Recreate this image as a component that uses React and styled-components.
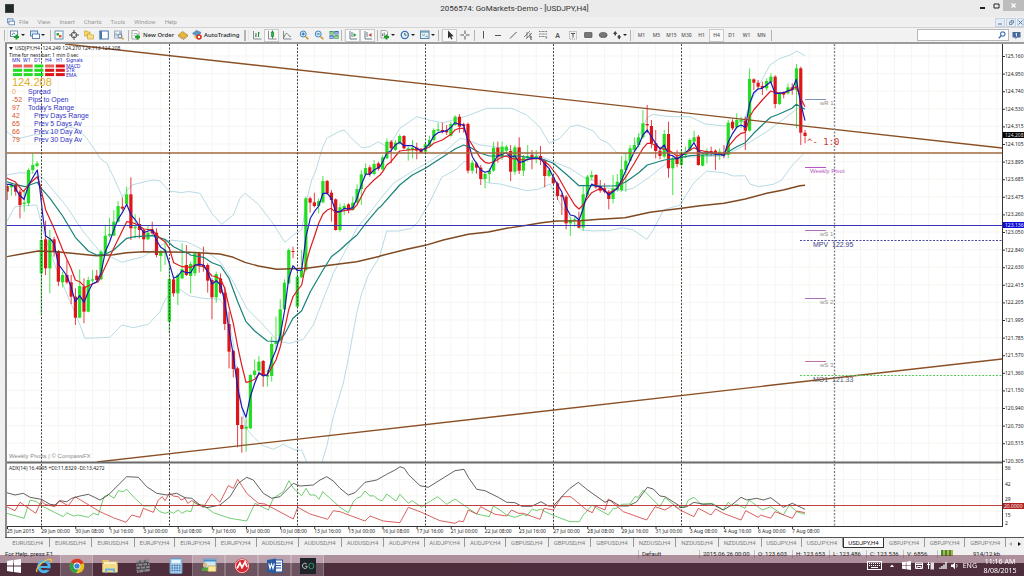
import React from "react";
import styled, { createGlobalStyle } from "styled-components";

const GREEN = "#22dd22";
const RED = "#dd1418";
const SANS = '"Noto Sans", "Open Sans", sans-serif';
const ARIAL = '"Liberation Sans", Arial, sans-serif';
const UI = 'Roboto, "Noto Sans", sans-serif';

/* ---------- chart data ---------- */

const STEP = 128 / 30;
const barX = (i) => 41.3 + i * STEP;

// colour, high, body top, body bottom, low (thirds of a pixel below "top")
const BARS = [
  {
    first: -8,
    top: 150,
    rows: `r 105 108 125 150;g 98 103 112 137;r 100 105 125 137;r 118 125 165 205;g 120 158 162 185;g 55 60 160 168;g 10 45 60 70;g 33 40 48 52;
      g 220 270 370 495;r 212 268 355 375;g 240 268 355 430;r 260 268 305 320;r 300 303 395 408;g 365 375 397 412;r 330 375 397 402;r 375 397 440 462;
      r 415 440 503 525;g 358 408 503 505;r 385 410 485 520;g 380 390 485 487;g 360 388 392 398;r 360 377 390 397;g 300 305 388 390;g 228 257 310 312;
      g 203 252 257 262;g 180 215 257 258;g 153 168 215 217;r 142 170 176 182;g 110 133 162 168;r 82 133 235 270;g 193 230 235 265;r 203 222 240 265;
      r 235 240 268 305;g 225 248 268 270;r 215 238 250 254;r 235 248 315 322;g 300 305 318 365;g 270 300 304 345;g 340 387 515 550;r 380 388 430 440;
      g 370 375 430 465;g 280 358 385 388;r 285 345 375 378;g 335 342 378 430`,
  },
  {
    first: 36,
    top: 170,
    rows: `g 245 250 310 318;r 245 250 285 308;r 230 285 290 305;r 280 285 332 368;r 325 330 382 448;g 305 312 382 398;r 310 325 368 372;r 350 368 462 480;
      r 425 462 545 595;r 540 543 597 622;r 590 595 765 832;r 740 765 777 848;g 745 770 776 845;g 612 615 775 777;g 568 602 615 625;g 558 575 602 610;
      r 570 573 618 650;g 600 615 620 650;g 500 522 618 635;g 440 515 522 540;g 388 418 512 515;g 328 338 418 420;g 235 240 340 342;r 230 243 246 265;
      g 295 320 410 412;g 240 300 322 325;g 80 85 300 305;r 80 85 98 128;r 68 97 108 112;g 85 93 108 130;g 18 33 97 100;r 30 33 70 74;
      r 60 68 90 155;r 85 88 180 182;g 100 112 180 185;g 100 108 115 135;r 100 103 120 130;g 80 98 120 122;g 43 57 98 100;g 0 13 57 105;
      g -20 -6 13 18;r -14 -8 12 20;g -30 -18 12 16;r -25 -20 -4 2`,
  },
  {
    first: 80,
    top: 100,
    rows: `g 165 172 208 212;g 115 125 175 178;r 120 125 145 190;g 120 128 150 153;g 103 108 130 133;r 105 108 145 148;g 140 145 150 182;g 120 143 150 175;
      r 128 143 152 178;r 144 148 158 160;g 125 133 155 158;g 107 120 138 142;g 85 90 120 124;g 68 88 92 95;r 68 90 96 100;r 75 92 97 105;
      g 65 72 107 110;g 46 50 75 78;r 42 50 80 98;r 68 73 78 98;r 68 72 212 220;g 180 188 212 222;r 185 190 203 220;r 195 203 237 255;
      g 218 222 237 265;g 205 212 222 248;g 125 143 212 215;r 125 143 172 188;g 125 140 170 180;g 135 140 152 158;r 135 153 215 243;g 135 142 215 225;
      r 112 142 212 222;g 165 172 212 228;g 135 168 175 185;r 150 165 175 208;g 150 168 175 190;r 138 168 180 195;r 178 182 228 262;g 205 210 228 232;
      r 225 232 250 252;r 245 250 288 300;r 280 285 290 345;r 285 290 370 388;g 350 360 370 408;g 350 358 362 380;r 335 360 383 385;g 255 283 383 392;
      g 225 230 285 290;g 212 225 232 240;r 222 225 262 266;r 240 258 272 278`,
  },
  {
    first: 132,
    top: 80,
    rows: `r 310 325 335 340;r 330 335 357 388;g 285 325 357 370;g 282 305 330 335;g 228 268 330 335;g 220 242 270 335;g 195 205 242 245;g 172 195 210 214;
      g 160 172 195 202;g 90 130 172 176;r 75 132 136 160;r 120 138 190 205;r 150 190 213 235;r 200 212 228 238;g 150 162 230 235;r 125 162 265 293;
      g 228 235 265 345;r 210 230 252 262;g 210 220 255 258;g 200 215 225 235;g 175 180 212 215;g 152 172 185 190;r 165 170 255 257;g 220 225 257 259;
      g 205 213 225 250;r 200 213 220 228;r 208 212 222 270;g 205 215 222 240;r 195 218 222 235;g 120 128 225 235;r 118 125 145 150;g 100 120 142 145`,
  },
  {
    first: 164,
    top: 0,
    rows: `g 350 360 365 385;r 350 362 392 450;g 205 237 392 395;r 235 238 248 270;r 240 248 260 268;r 245 258 264 285;g 235 243 265 272;g 220 230 247 250;
      r 226 230 312 325;g 276 280 312 315;r 274 278 284 295;g 250 262 280 284;r 250 262 270 284;g 192 205 270 385;r 200 205 398 435;r 390 398 408 430`,
  },
];

const candles = BARS.flatMap(({ first, top, rows }) =>
  rows.split(";").map((row, n) => {
    const [c, ...v] = row.trim().split(/\s+/);
    const [high, open, close, low] = v.map((n) => top + Number(n) / 3);
    return { x: barX(first + n), up: c === "g", high, open, close, low };
  })
);

// every chunk is "x,y x,y ..." in thirds of a pixel from its own origin
const trace = (chunks) =>
  chunks
    .map(([ox, oy, pts]) =>
      pts
        .split(" ")
        .map((p) => {
          const [x, y] = p.split(",").map(Number);
          return `${(ox + x / 3).toFixed(1)},${(oy + y / 3).toFixed(1)}`;
        })
        .join(" ")
    )
    .join(" ");

const fastMa = trace([
  [0, 150, "20,103 30,103 42,108 58,135 72,148 86,105 100,80 112,60 120,120 130,210 137,258 150,266 162,280 175,342 188,360 201,378 213,410 226,455 239,437 252,457 265,425 277,402 290,395 303,370 316,305 329,275 341,240 354,208 367,188 380,163 393,195 405,208 418,228 431,248 444,243 457,240 469,270 482,292 495,300 508,340 521,385 534,378 546,362 559,368 572,368"],
  [190, 170, "15,285 28,283 41,285 53,305 66,342 79,332 92,345 104,395 117,480 130,555 143,655 155,710 168,742 181,680 194,640 207,608 220,618 232,615 245,570 258,540 271,495 284,420 296,325 309,287 322,302 335,300 348,200 361,145 373,125 386,108 399,70 412,70 424,85 437,125 450,125 463,115 475,117 488,113 501,85 514,45 527,12 539,13 552,0"],
  [380, 100, "0,200 8,185 20,160 33,152 46,135 59,127 72,137 84,137 97,137 110,145 123,152 136,145 149,130 161,108 174,98 187,95 200,92 213,82 225,68 238,73 251,75 264,125 277,170 289,190 302,210 315,217 328,213 341,185 353,168 366,163 379,158 392,172 405,168 417,187 430,185 443,178 456,175 469,175 481,175 494,192 507,205 520,232 533,255 545,275 558,322 571,345 584,348 597,360 609,328 622,280 635,252 648,258"],
  [600, 80, "1,320 14,332 26,345 39,335 52,325 65,300 78,270 90,242 103,215 116,195 129,165 142,150 154,170 167,190 180,207 193,195 206,225 218,227 231,237 244,228 257,218 270,205 282,188 295,213 308,220 321,218 334,218 346,223 359,222 372,227 385,185 398,160 410,142 423,135"],
  [680, 0, "196,382 209,310 221,278 234,267 247,265 260,255 272,245 285,280 298,280 311,278 324,272 336,270 349,238 362,310 375,362"],
]);

const slowMa = trace([
  [0, 150, "20,84 45,95 70,125 90,100 112,80 120,105 137,180 162,235 188,300 213,355 226,390 239,395 256,412 275,403 295,395 316,350 341,295 380,215 393,217 410,223 431,237 457,240 469,253 482,266 495,275 508,295 521,338 546,350 572,352"],
  [190, 170, "15,285 41,290 66,318 79,320 92,328 104,355 117,410 130,460 143,530 155,585 168,637 181,634 194,628 207,612 220,613 232,615 258,570 271,530 284,475 296,420 309,380 322,362 335,345 348,280 361,235 373,200 386,160 399,132 412,120 424,115 437,128 463,122 488,118 501,105 514,80 527,55 552,30"],
  [380, 100, "0,225 8,215 20,195 33,185 59,153 84,150 123,148 136,147 149,140 161,130 187,120 213,103 225,90 238,85 251,85 264,115 277,135 289,155 302,175 315,187 328,190 341,185 366,172 379,168 392,175 430,180 456,177 481,175 507,195 533,228 558,272 584,315 597,327 609,315 622,295 635,278"],
  [600, 80, "1,325 26,340 52,325 78,290 103,250 129,205 142,190 154,190 180,205 206,210 231,228 257,218 282,203 295,210 334,218 372,223 385,200 410,170 423,160"],
  [680, 0, "196,397 209,350 221,330 247,300 272,273 285,278 311,280 336,268 349,260 362,295 375,320"],
]);

const tealMa = trace([
  [0, 150, "20,95 45,103 75,110 112,97 124,115 150,145 188,198 226,262 265,303 290,315 316,313 341,300 380,265 405,260 457,257 495,268 521,290 546,303 570,313"],
  [190, 170, "0,255 41,262 66,278 92,288 117,325 143,395 168,455 194,483 232,513 265,515 284,492 309,445 335,422 361,365 399,300 424,260 450,240 475,217 501,195 527,160 565,115"],
  [380, 100, "0,322 59,255 97,225 136,205 187,172 225,147 251,135 270,142 302,160 328,168 366,168 417,168 443,172 481,175 520,190 558,222 597,257 648,257"],
  [600, 80, "1,318 39,318 52,317 78,305 116,278 142,255 193,240 231,235 270,227 308,225 372,225 385,215 410,200 423,194"],
  [680, 0, "196,428 221,400 260,362 272,352 298,342 336,325 349,313 375,328"],
]);

const longMa = trace([
  [0, 150, "20,320 60,313 115,303 170,305 215,310 290,317 340,314 380,308 430,305 508,306 568,307"],
  [190, 170, "0,247 90,252 130,262 165,277 205,288 260,298 350,295 400,288 500,275 570,259"],
  [380, 100, "0,468 80,448 136,436 190,420 265,403 325,396 380,385 440,376 485,368 530,363 600,362 658,358"],
  [600, 80, "0,418 75,413 150,397 245,385 300,377 372,370 436,357 500,340 550,330 600,317 615,316"],
]);

const bandTop = trace([
  [0, 0, "20,395 45,413 60,415 100,405 160,398 205,380 235,388 260,415"],
  [0, 150, "285,0 300,25 320,40 340,80 367,140 395,105 435,95 460,90 480,93 508,123 545,128 560,125"],
  [190, 170, "0,65 30,70 65,130 95,163 130,135 150,85 165,70 205,103 245,155 285,217 310,195 335,180 350,90 365,30 378,0"],
  [0, 0, "965,450 980,415"],
  [340, 0, "0,393 12,390 40,420 65,443 90,440 115,425 135,437 155,425 180,385 230,350 275,362 310,368 375,350 440,325 515,325 560,345 600,382 628,430 660,415 690,380 715,375 760,393"],
  [600, 80, "0,178 25,190 50,218 75,222 95,215 125,150 142,112 160,103 190,108 220,110"],
  [680, 0, "30,350 75,372 135,378 190,365 215,300 240,250 270,195 300,175 330,165 350,153 375,167"],
]);

const bandMid = trace([
  [0, 150, "20,75 60,68 100,70 130,85 200,170 250,245 300,305 365,337 430,320 470,295 508,270 560,275"],
  [190, 170, "0,220 50,245 90,275 130,335 170,415 220,465 265,515 300,520 340,508 370,465 430,310 470,235 500,175 550,115"],
  [380, 100, "0,298 40,250 100,212 140,190 200,150 240,115 255,118 300,135 345,140 480,168 520,185 570,205 620,238 650,244"],
  [600, 80, "0,318 60,333 100,325 150,290 200,250 240,232 372,228 436,195 500,155 560,110 600,80"],
]);

const bandLow = trace([
  [0, 150, "20,215 45,170 75,167 110,165 130,245 170,360 200,430 240,525 255,565 330,562 365,525 400,533 445,523 480,485 495,450 515,425 540,418 560,432"],
  [190, 170, "0,378 40,385 90,388 110,420 130,520 145,640 165,770 190,800 215,825 250,838 280,823 315,840 335,840 352,880 395,880 410,830 430,740 460,640 480,540 500,430 515,370 535,315 560,275"],
  [380, 100, "0,465 20,393 55,393 95,385 115,365 150,305 185,232 225,210 255,183 285,215 320,248 360,252 440,272 475,268 510,252 545,320 575,360 605,390 640,393"],
  [600, 80, "0,452 25,452 70,443 100,450 140,478 160,450 190,390 240,375 280,310 320,273 370,278 400,288 435,287 450,312 475,320 520,313 545,300 575,258 612,220"],
]);

const adxLine = trace([
  [0, 445, "20,143 45,150 70,145 90,157 124,163 150,178 165,180 180,167 200,170 215,160 240,153 265,148 300,165 325,150 355,120 380,95 415,97 440,125 470,145 500,150 530,145 555,158 575,160 600,180 620,188 660,180 690,155 715,115 740,97 760,105 790,145 815,160 840,155 880,115 900,123 940,120 960,105 980,95 1000,108"],
  [340, 445, "0,130 25,150 45,143 75,112 110,105 140,88 165,75 180,65 193,70 205,88 240,122 265,127 300,105 345,77 372,73 385,97 410,133 435,137 475,157 500,172 525,173 545,184 575,184 603,170 625,183 640,183 670,150 690,130 715,112 740,133 795,172 810,165 840,183 865,183 890,170 922,127 940,132 960,153 975,155 1018,182"],
  [680, 445, "0,188 20,185 42,172 70,178 95,177 130,195 155,180 183,157 200,165 230,160 250,165 272,158 310,187 337,175 375,193"],
]);

const plusDi = trace([
  [0, 445, "20,205 45,212 72,220 90,165 110,170 130,185 190,215 200,203 220,213 235,210 265,217 280,205 295,210 312,155 325,148 342,160 355,137 370,140 380,133 400,155 430,183 460,182 480,200 495,205 510,200 520,205 535,195 545,205 560,197 573,200 583,170 590,178 610,180 640,203 690,220 740,228 765,175 805,195 820,160 850,140 867,107 880,130 905,152 918,130 930,150 945,150 957,163 968,140"],
  [340, 445, "0,187 25,203 40,170 50,160 62,155 75,138 90,153 100,152 118,165 127,167 140,147 168,168 180,148 205,175 217,167 245,187 257,177 293,155 320,178 345,162 385,190 410,207 448,215 460,183 480,195 500,210 525,217 550,208 560,213 577,192 590,197 603,192 615,200 645,213 690,230 718,230 730,210 757,180 770,190 805,210 820,190 830,190 845,178 870,177 885,155 895,157 910,135 960,185 975,158 1015,190"],
  [680, 445, "0,185 15,187 25,165 42,157 62,177 97,175 130,195 145,172 155,183 170,178 195,190 207,165 247,195 272,185 310,210 328,180 350,200 375,208"],
]);

const minusDi = trace([
  [0, 445, "20,185 45,197 60,172 107,205 124,168 135,178 165,185 177,167 205,182 225,155 300,200 340,218 378,232 395,210 420,217 430,190 460,202 475,165 487,155 495,167 508,145 520,153 535,155 543,165 555,160 563,175 575,167 610,187 635,147 660,172 685,122 700,130 713,103 740,145 775,175 795,177 880,222 893,187 930,207 983,223 1000,197"],
  [340, 445, "0,200 75,228 90,213 130,228 180,233 205,187 240,200 300,227 345,235 357,228 370,230 385,195 410,207 422,185 465,208 500,213 515,195 535,205 550,205 600,223 612,190 640,195 665,155 692,155 740,195 757,203 767,183 795,195 805,162 850,200 920,225 945,185 975,195 1000,180"],
  [680, 445, "0,195 42,215 55,190 93,210 107,192 130,205 183,225 197,197 235,217 242,210 272,220 285,200 337,220 350,198 375,203"],
]);

const prices = [
  "125.160", "124.950", "124.740", "124.530", "124.315", "124.105", "123.895", "123.685",
  "123.475", "123.260", "123.050", "122.840", "122.630", "122.415", "122.205", "121.995",
  "121.785", "121.570", "121.360", "121.150", "120.940", "120.730", "120.515", "120.305",
];
const priceY = (n) => 56 + n * 17.6;

const dates = [
  "25 Jun 2015", "29 Jun 00:00", "30 Jun 08:00", "1 Jul 16:00", "3 Jul 00:00", "6 Jul 08:00",
  "7 Jul 16:00", "9 Jul 00:00", "10 Jul 08:00", "13 Jul 16:00", "15 Jul 00:00", "16 Jul 08:00",
  "17 Jul 16:00", "21 Jul 00:00", "22 Jul 08:00", "23 Jul 16:00", "27 Jul 00:00", "28 Jul 08:00",
  "29 Jul 16:00", "31 Jul 00:00", "3 Aug 08:00", "4 Aug 16:00", "6 Aug 00:00", "7 Aug 08:00",
];

const stats = [
  ["0", "Spread", 28],
  ["-52", "Pips to Open", 28],
  ["97", "Today's Range", 28],
  ["42", "Prev Days Range", 34],
  ["65", "Prev 5 Days Av", 34],
  ["66", "Prev 10 Day Av", 34],
  ["79", "Prev 30 Day Av", 34],
];

const SALMON = "#e8645c";
const signals = [
  ["MACD", [SALMON, SALMON, GREEN, SALMON, RED]],
  ["STR", [GREEN, GREEN, GREEN, RED, RED]],
  ["EMA", [GREEN, GREEN, GREEN, RED, RED]],
];

const pivots = [
  ["wR 1", 99, "#8090b8", 820, "#909090"],
  ["Weekly Pivot", 167, "#b455c4", 810, "#b455c4"],
  ["wS 1", 230, "#b070b8", 820, "#909090"],
  ["wS 2", 298, "#b070b8", 820, "#909090"],
  ["wS 3", 361, "#c070a8", 820, "#909090"],
];

const Plot = () => (
  <PlotSvg role="img" aria-label="USDJPY H4 chart">
    <defs>
      <clipPath id="main">
        <rect x="7" y="44" width="3000" height="418" />
      </clipPath>
    </defs>
    <g transform="translate(-7 -44)">
      <g stroke="#f5f5f1" strokeWidth="1">
        {Array.from({ length: 58 }, (_, k) => 24.2 + k * STEP * 4).map((x) => (
          <line key={x} x1={x} x2={x} y1="44" y2="526" />
        ))}
        {[...prices.map((_, n) => priceY(n)), 479.5, 496, 511].map((y) => (
          <line key={y} x1="7" x2="3000" y1={y} y2={y} />
        ))}
      </g>

      <g fill="none" stroke="#b9dbe6" clipPath="url(#main)">
        <polyline points={bandTop} />
        <polyline points={bandMid} />
        <polyline points={bandLow} />
      </g>

      <g clipPath="url(#main)">
        {candles.map((c) => (
          <g key={c.x} fill={c.up ? GREEN : RED}>
            <rect x={c.x - 0.5} y={c.high} width="1" height={c.low - c.high} opacity="0.8" />
            <rect x={c.x - 1.6} y={c.open} width="3.2" height={c.close - c.open} />
          </g>
        ))}
      </g>

      <g fill="none" strokeWidth="1.2" strokeLinejoin="round">
        <polyline points={longMa} stroke="#7f4a22" strokeWidth="1.4" />
        <polyline points={tealMa} stroke="#17827a" />
        <polyline points={slowMa} stroke="#dc1c20" />
        <polyline points={fastMa} stroke="#1a1ab8" />
      </g>

      <g stroke="#8b5026" strokeWidth="1.4" clipPath="url(#main)">
        <line x1="65" y1="44" x2="1002" y2="148" />
        <line x1="97" y1="462" x2="1002" y2="359" />
        <line x1="7" y1="153" x2="3000" y2="153" stroke="#a0683c" strokeWidth="1.6" />
      </g>
      <rect x="7" y="225" width="3000" height="1" fill="#3838b4" />

      {/* period separators */}
      <g stroke="#444" strokeDasharray="2 1.5">
        {[41.5, 169.5, 297.5, 425.5, 553.5, 681.5].map((x) => (
          <line key={x} x1={x} x2={x} y1="44" y2="526" />
        ))}
        <line x1="834.5" x2="834.5" y1="44" y2="526" stroke="#888" strokeWidth="1.4" />
      </g>

      <line x1="800" x2="3000" y1="240.5" y2="240.5" stroke="#4848a0" strokeDasharray="2 1.5" />
      <line x1="800" x2="3000" y1="375.5" y2="375.5" stroke="#58c858" strokeDasharray="2 1.5" />
      {pivots.map(([name, y, line, x, color]) => (
        <g key={name}>
          <line x1="805" x2="826" y1={y + 0.5} y2={y + 0.5} stroke={line} />
          <Note x={x} y={y + 6} $color={color}>{name}</Note>
        </g>
      ))}
      <Note x="813" y="247" $size={7} $color="#3c3c84">MPV</Note>
      <Note x="832" y="247" $size={7} $color="#3c3c84">122.95</Note>
      <Note x="813" y="382" $size={7} $color="#54546c">MO1</Note>
      <Note x="832" y="382" $size={7} $color="#54546c">121.33</Note>
      <MonoNote x="807" y="145">^- 1:0</MonoNote>

      {/* info panel */}
      <path d="M9 47h4l-2 3z" fill="#111" />
      <Tiny x="15" y="50">USDJPY,H4&#160; 124.249 124.270 124.113 124.208</Tiny>
      <Tiny x="9" y="57">Time for next bar: 1 min 0 sec</Tiny>
      {["MN", "W1", "D1", "H4", "H1"].map((t, n) => (
        <Tiny key={t} x={12 + n * 11} y="62" $color="#2424c4">{t}</Tiny>
      ))}
      <Tiny x="66" y="62" $color="#2424c4">Signals</Tiny>
      {signals.map(([name, colors], row) => (
        <g key={name}>
          {colors.map((c, n) => (
            <rect key={n} x={13 + n * 10.7} y={64.5 + row * 4.3} width="9" height="3" fill={c} />
          ))}
          <Tiny x="66" y={68 + row * 4.3} $color="#2424c4">{name}</Tiny>
        </g>
      ))}
      <Note x="12" y="86" $size={11} $color="#dcae28">124.208</Note>
      {stats.map(([value, label, x], n) => (
        <g key={label}>
          <Note x="12" y={93.5 + n * 8} $size={7} $color={n ? "#e0501c" : "#eca850"}>{value}</Note>
          <Note x={x} y={93.5 + n * 8} $size={7} $color="#3434c4">{label}</Note>
        </g>
      ))}
      <Note x="9" y="458" $color="#8a8a8a">Weekly Pivots | © CompassFX</Note>

      {/* indicator window */}
      <rect x="7" y="461.5" width="3000" height="2" fill="#6a6a6a" />
      <g fill="none" strokeWidth="0.8">
        <polyline points={plusDi} stroke="#4fc050" />
        <polyline points={minusDi} stroke="#d03838" />
        <polyline points={adxLine} stroke="#3a3a3a" />
      </g>
      <rect x="7" y="505" width="3000" height="1" fill="#c04040" />
      <Tiny x="9" y="470">ADX(14) 16.4995 +DI:11.8329 -DI:13.4272</Tiny>

      <rect x="7" y="526" width="3000" height="1" fill="#333" />
      {dates.map((d, n) => (
        <g key={d}>
          <rect x={7 + n * STEP * 8} y="526" width="1" height="3" fill="#333" />
          <Tiny x={7 + n * STEP * 8} y="533">{d}</Tiny>
        </g>
      ))}
    </g>
  </PlotSvg>
);

const Scale = () => (
  <ScaleSvg role="img" aria-label="Price scale">
    <g transform="translate(-1002 -44)">
      <rect x="1002" y="44" width="1" height="483" fill="#333" />
      {prices.map((p, n) => (
        <g key={p}>
          <rect x="1003" y={priceY(n)} width="2" height="1" fill="#333" />
          <Tiny x="1005" y={priceY(n) + 2}>{p}</Tiny>
        </g>
      ))}
      <rect x="1003" y="132" width="21" height="6" fill="#000" />
      <Tiny x="1005" y="137" $color="#ddd">124.208</Tiny>
      <rect x="1003" y="222" width="21" height="6" fill="#0c0cd8" />
      <Tiny x="1005" y="227" $color="#eee">123.136</Tiny>
      {[["56", 470], ["42", 486], ["29", 501], ["15", 517], ["2", 525]].map(([t, y]) => (
        <Tiny key={t} x="1005" y={y}>{t}</Tiny>
      ))}
      <rect x="1003" y="503" width="21" height="6" fill="#b42020" />
      <Tiny x="1004" y="508" $color="#eee">20.0000</Tiny>
    </g>
  </ScaleSvg>
);

/* ---------- toolbar icons, 10 x 10 ---------- */

const plus = <path d="M6.500 4.500v5M4 7h5" stroke="#18a028" strokeWidth="2" />;

const glyphs = {
  newChart: <><rect x="0.5" y="1" width="7" height="5.5" fill="#fff" stroke="#6a8aa8" /><path d="M2 5l1.500-2L5 4" stroke="#48a" />{plus}</>,
  profiles: <><rect x="0.5" y="1" width="7" height="5" fill="#d8e8f8" stroke="#5a86b4" /><rect x="2.5" y="4" width="7" height="4.5" fill="#fff" stroke="#5a86b4" /></>,
  market: <><rect x="1" y="1" width="8" height="8" fill="#fff" stroke="#6a96b8" /><path d="M2.500 3h2.500v2.500H2.500z" fill="#28a838" /><path d="M5 5h2.500v2.500H5z" fill="#d86030" /></>,
  target: <><circle cx="5" cy="5" r="2.800" stroke="#555" /><path d="M5 0v4M5 6v4M0 5h4M6 5h4" stroke="#555" /></>,
  folders: <><path d="M0 1h3l1 1h2v4H0z" fill="#f4d668" stroke="#c09428" strokeWidth="0.6" /><path d="M3.500 4h3l1 1h2.200v4H3.500z" fill="#f8e080" stroke="#c09428" strokeWidth="0.6" /></>,
  terminal: <><rect x="0.8" y="1" width="8.500" height="8" fill="#fff" stroke="#4878b0" /><rect x="1" y="1" width="2" height="8" fill="#4878b0" /></>,
  tester: <><rect x="0.5" y="1" width="7" height="7" fill="#e8f0f8" stroke="#9ab" /><path d="M2 6V3M4 6V4M6 5V2" stroke="#7898b8" /><circle cx="6" cy="6" r="2" stroke="#789" /><path d="M7.500 7.500l2 2" stroke="#c89838" strokeWidth="1.4" /></>,
  order: <><path d="M1 0.500h5l2 2V9H1z" fill="#fff" stroke="#888" strokeWidth="0.7" /><path d="M2.500 3.500h4M2.500 5.500h2" stroke="#889" strokeWidth="0.7" />{plus}</>,
  book: <><path d="M0.500 5L4.500 1.500 9.500 5 5.500 8.500z" fill="#e8b838" stroke="#b07c18" strokeWidth="0.7" /><path d="M0.500 5v1.500l5 3 4-3V5" stroke="#b07c18" strokeWidth="0.7" /></>,
  auto: <><path d="M0.500 3.500l4-3 4.500 2-3 4z" fill="#5a98cc" stroke="#3870a0" strokeWidth="0.6" /><path d="M1 5l3 4 2-2z" fill="#e4b840" /><circle cx="7" cy="7" r="2.800" fill="#d83828" /><path d="M6 6h2v2H6z" fill="#fff" /></>,
  bars: <><path d="M1.500 1v8h8" stroke="#889" /><path d="M4 3v4M3 6h1M6.500 2v5M6.500 3h1.200" stroke="#2a8a38" /></>,
  candles: <><path d="M1.500 1v8h8" stroke="#889" /><path d="M5.500 0.500v8" stroke="#2a8a38" /><rect x="4.2" y="2" width="2.600" height="4.500" fill="#38b048" stroke="#2a8a38" strokeWidth="0.6" /></>,
  line: <><path d="M1.500 1v8h8" stroke="#889" /><path d="M2 7.500Q4 1 6 4.500T9 6" stroke="#6a8a78" /></>,
  zoomIn: <><circle cx="4.2" cy="4" r="3" fill="#d4eaf8" stroke="#4888b8" /><path d="M2.700 4h3M4.200 2.500v3" stroke="#2868a0" /><path d="M6.500 6.500l2.800 2.800" stroke="#c8982c" strokeWidth="1.6" /></>,
  zoomOut: <><circle cx="4.2" cy="4" r="3" fill="#d4eaf8" stroke="#4888b8" /><path d="M2.700 4h3" stroke="#2868a0" /><path d="M6.500 6.500l2.800 2.800" stroke="#c8982c" strokeWidth="1.6" /></>,
  tile: <><path d="M0.500 1h4.200v3.600H0.500zM5.400 5.200h4.200v3.600H5.400z" fill="#38a040" /><path d="M5.400 1h4.200v3.600H5.400zM0.500 5.200h4.200v3.600H0.500z" fill="#3468b8" /><path d="M1.300 3h2.600M6.200 3h2.600M1.300 7.200h2.600M6.200 7.200h2.600" stroke="#fff" /></>,
  scroll: <><path d="M2 1v8h7M4 2v5" stroke="#6a7a8a" /><path d="M5.500 3l3 2-3 2z" fill="#2a9a3a" /></>,
  shift: <><path d="M2 1v8h7M4 2v5" stroke="#6a7a8a" /><path d="M8.500 3l-3 2 3 2z" fill="#c04040" /></>,
  indicators: <><path d="M1 0.500h5l1.500 1.500V8H1z" fill="#fff" stroke="#888" strokeWidth="0.7" /><path d="M2.500 6V3.500M4.200 6V2.500" stroke="#777" />{plus}</>,
  clock: <><circle cx="4.8" cy="5" r="4.2" fill="#2f72b8" /><circle cx="4.8" cy="5" r="2.9" fill="#e8f4fc" /><path d="M4.800 3v2.200h1.700" stroke="#234" strokeWidth="0.8" /></>,
  template: <><rect x="0.5" y="1" width="8.500" height="7.500" fill="#e4f0f8" stroke="#5888a8" /><path d="M0.500 2h8.500" stroke="#5888a8" /><path d="M2 4.500l1.500 1 1.500-1M5.500 7l1-1 1.500 1" stroke="#486" strokeWidth="0.8" /></>,
  cursor: <path d="M3 0.500v8l2-1.800 1.200 2.800 1.300-.6-1.200-2.600h2.500z" fill="#333" />,
  cross: <path d="M5 0.500v3.500M5 6v3.500M0.500 5H4M6 5h3.500" stroke="#555" />,
  vline: <path d="M5.500 1v7.500" stroke="#555" />,
  hline: <path d="M2 5.500h6" stroke="#555" />,
  trend: <path d="M2 8.500L8.500 2" stroke="#555" />,
  channel: <><path d="M1 7L7 1M3 9l6-6M4 2v6M7 3v5" stroke="#666" strokeWidth="0.8" /><path d="M7 9h2M7 7h2" stroke="#444" /></>,
  fibo: <path d="M1 1.500h8M1 4h8M1 6.500h6M8 6v3M8 7.500h1.500" stroke="#777" strokeDasharray="1 0.400" />,
  label: <><rect x="1.5" y="1.5" width="7" height="7.5" stroke="#999" strokeDasharray="1 1" /><path d="M3 3.500h4M5 3.500v4" stroke="#555" /></>,
  box: <rect x="1.5" y="2.5" width="7.5" height="5" rx="0.5" fill="#777" stroke="#555" strokeWidth="0.7" />,
  ellipse: <ellipse cx="5.2" cy="5" rx="4" ry="2.6" fill="#777" stroke="#555" strokeWidth="0.7" />,
  arrows: <path d="M1 4l2.200-3 2.200 3H4v1.500H2.500V4zM5 6.500l2.200 3 2-3H8V5H6.300v1.500z" fill="#444" />,
};

const Glyph = ({ name, size = 10 }) => (
  <svg width={size} height={size} viewBox="0 0 10 10" fill="none" aria-hidden="true">
    {glyphs[name]}
  </svg>
);

const Tool = ({ icon, active }) => (
  <ToolButton type="button" aria-label={icon} $active={active}>
    <Glyph name={icon} />
  </ToolButton>
);

const DropTool = ({ icon }) => (
  <DropButton type="button" aria-label={icon}>
    <Glyph name={icon} />
    <Caret />
  </DropButton>
);

/* ---------- taskbar icons, 16 x 16 ---------- */

const apps = [
  ["Internet Explorer", false, <><circle cx="8" cy="8.500" r="5.200" stroke="#4ab4ec" strokeWidth="3" /><path d="M4 9h9" stroke="#4ab4ec" strokeWidth="2" /><path d="M10.500 10.300h5v1.800h-5z" fill="#52303f" /><path d="M1 14C-1 10 9 0 15 1.500c1 .6.500 2-.5 3" stroke="#f0c040" strokeWidth="1.3" /></>],
  ["Chrome", true, <><circle cx="8" cy="8" r="7.300" fill="#e8c020" /><path d="M8 8L1.700 4.300A7.300 7.300 0 0 1 14.700 5z" fill="#d83a2c" /><path d="M8 8L1.700 4.300A7.300 7.300 0 0 0 7 15.200L10 10z" fill="#30a048" /><circle cx="8" cy="8" r="3.400" fill="#f4f4f4" /><circle cx="8" cy="8" r="2.600" fill="#3c80d8" /></>],
  ["File Explorer", false, <><path d="M0.500 2h6l1 1.500h8V14H0.500z" fill="#e8c868" /><path d="M2 4h12v3H2z" fill="#f8f0c8" /><path d="M0.500 6h15v8.500H0.500z" fill="#f4dc88" /><path d="M3 15V10.500h10V15h-2v-2.500H5V15z" fill="#6cb4e0" /></>],
  ["Server", false, <><path d="M1 3l13-2 1 12-13 2z" fill="#8a8a90" /><path d="M1 5.500l13-1M1.500 8.500l13-1M2 11.500l13-1M5 2.500V6M10 2v3M3 6v3M8 5.500V9M12.500 5v3M5.500 8.500v3M10.500 8v3M4 11.500V15M9 11v3" stroke="#4a4048" /></>],
  ["Calculator", false, <><rect x="2" y="0.5" width="12" height="15" rx="1" fill="#a8cce8" stroke="#6898c0" /><rect x="3.5" y="2" width="9" height="3" fill="#e8f8ff" /><path d="M3.500 7.500h9M3.500 10h9M3.500 12.500h9" stroke="#4878b0" strokeWidth="1.5" strokeDasharray="1.600 0.850" /></>],
  ["Messenger", true, <><rect x="3" y="1" width="12" height="9" fill="#d0e8f4" stroke="#70a0c0" /><path d="M3 2.500h12" stroke="#4890c8" strokeWidth="2" /><circle cx="4" cy="7" r="2.200" fill="#e4b880" /><path d="M0.500 13c0-5 7-5 7 0z" fill="#50a838" /><rect x="7" y="8" width="8" height="5.500" fill="#f8e8a0" stroke="#c0a048" strokeWidth="0.7" /></>],
  ["Trading", true, <><circle cx="8" cy="8" r="7.500" fill="#d82830" /><circle cx="8" cy="8" r="6.600" stroke="#fff" strokeWidth="0.7" /><path d="M3 10.500L6 5l2 4.500L11 4l2 5" stroke="#fff" strokeWidth="1.7" /></>],
  ["Word", true, <><rect x="7" y="2" width="8.500" height="12" fill="#f4f8fc" stroke="#2a5aa0" /><path d="M9 5h5M9 7.500h5M9 10h5" stroke="#2a5aa0" /><path d="M0 2l9-1.500v15L0 14z" fill="#2a5aa0" /><path d="M1.800 5.500L3 10.500 4.500 6 6 10.500 7.300 5.500" stroke="#fff" strokeWidth="1.1" /></>],
];

const GoLogo = () => (
  <svg width="16" height="16" viewBox="0 0 16 16" fill="none" aria-hidden="true">
    <rect width="16" height="16" fill="#20242a" />
    <path d="M6.800 6A2.600 2.600 0 1 0 7 9.500V8.200H5.200" stroke="#bbb" />
    <ellipse cx="11.3" cy="8" rx="2.5" ry="2.8" stroke="#2a9a68" />
  </svg>
);

const PAIRS = ["EURUSD", "EURJPY", "AUDUSD", "AUDJPY", "GBPUSD", "NZDUSD", "USDJPY", "GBPJPY"];

const App = () => (
  <Window>
    <GlobalStyle />
    <TitleBar>
      <AppIcon />
      <Title>2056574: GoMarkets-Demo - [USDJPY,H4]</Title>
      <WindowButtons>
        <WinButton type="button" aria-label="Minimize">
          <svg width="7" height="7"><path d="M1 6h5" stroke="#222" strokeWidth="2" /></svg>
        </WinButton>
        <WinButton type="button" aria-label="Maximize">
          <svg width="7" height="7"><path d="M1 2h5v4H1z" fill="none" stroke="#222" /></svg>
        </WinButton>
        <CloseButton type="button" aria-label="Close">
          <svg width="5" height="5"><path d="M0.500 0.500l4 4M4.500 0.500l-4 4" stroke="#fff" strokeWidth="1.2" /></svg>
        </CloseButton>
      </WindowButtons>
    </TitleBar>

    <MenuBar>
      <Glyph name="profiles" size={8} />
      {["File", "View", "Insert", "Charts", "Tools", "Window", "Help"].map((m) => (
        <MenuItem key={m} type="button">{m}</MenuItem>
      ))}
      <MdiButtons>
        <MdiButton type="button" aria-label="Minimize chart">
          <svg width="5" height="5"><path d="M0 4h4" stroke="#5878a0" /></svg>
        </MdiButton>
        <MdiButton type="button" aria-label="Restore chart">
          <svg width="5" height="5"><path d="M0.500 2h2.500v2.500H0.500zM2 2V0.500h2.500V3H3" fill="none" stroke="#5878a0" strokeWidth="0.8" /></svg>
        </MdiButton>
        <MdiButton type="button" aria-label="Close chart">
          <svg width="5" height="5"><path d="M0.500 0.500l4 4M4.500 0.500l-4 4" stroke="#5878a0" /></svg>
        </MdiButton>
      </MdiButtons>
    </MenuBar>

    <ToolBar>
      <Handle />
      <DropTool icon="newChart" />
      <DropTool icon="profiles" />
      <Divider />
      <Tool icon="market" />
      <Tool icon="target" />
      <Tool icon="folders" />
      <Tool icon="terminal" />
      <Tool icon="tester" />
      <Divider />
      <TextTool type="button" $w={46}><Glyph name="order" />New Order</TextTool>
      <Tool icon="book" />
      <TextTool type="button" $w={52}><Glyph name="auto" />AutoTrading</TextTool>
      <Divider />
      <Handle />
      <Tool icon="bars" />
      <Tool icon="candles" active />
      <Tool icon="line" />
      <Gap />
      <Tool icon="zoomIn" />
      <Tool icon="zoomOut" />
      <Tool icon="tile" />
      <Handle />
      <Tool icon="scroll" active />
      <Tool icon="shift" active />
      <Divider />
      <DropTool icon="indicators" />
      <DropTool icon="clock" />
      <DropTool icon="template" />
      <Handle />
      <Tool icon="cursor" active />
      <Tool icon="cross" />
      <Divider />
      <Tool icon="vline" />
      <Tool icon="hline" />
      <Tool icon="trend" />
      <Tool icon="channel" />
      <Tool icon="fibo" />
      <LetterTool type="button">A</LetterTool>
      <Tool icon="label" />
      <Tool icon="box" />
      <Tool icon="ellipse" />
      <DropTool icon="arrows" />
      <Handle />
      {["M1", "M5", "M15", "M30", "H1", "H4", "D1", "W1", "MN"].map((t) => (
        <PeriodButton key={t} type="button" $active={t === "H4"}>{t}</PeriodButton>
      ))}
      <Divider />
      <SearchBox>
        <SearchInput type="text" aria-label="Search" />
        <svg width="8" height="8" viewBox="0 0 8 8" fill="none">
          <circle cx="4.8" cy="3" r="2.2" stroke="#4878b0" strokeWidth="1.2" />
          <path d="M3.200 4.800L0.800 7.200" stroke="#4878b0" strokeWidth="1.6" />
        </svg>
      </SearchBox>
      <ChatButton type="button" aria-label="Messages">
        <svg width="9" height="9" viewBox="0 0 9 9">
          <path d="M0.500 1h8v5.500H5L3.500 8.500V6.500h-3z" fill="#48689c" />
          <path d="M4.500 2v3.500M3.500 3h1" stroke="#dfe8f4" />
        </svg>
      </ChatButton>
    </ToolBar>

    <ChartFrame>
      <Plot />
      <Scale />
    </ChartFrame>

    <TabBar>
      <TabList>
        {PAIRS.flatMap((pair) =>
          [0, 1, 2].map((n) => (
            <Tab
              key={pair + n}
              type="button"
              $grow={pair.endsWith("JPY") ? 20 : 21}
              $active={pair === "USDJPY" && n === 2}
            >
              {pair},H4
            </Tab>
          ))
        )}
      </TabList>
      <TabArrows>
        <ArrowButton type="button" aria-label="Scroll left">
          <svg width="3" height="4"><path d="M3 0v4L0 2z" fill="#aaa" /></svg>
        </ArrowButton>
        <ArrowButton type="button" aria-label="Scroll right">
          <svg width="3" height="4"><path d="M0 0v4l3-2z" fill="#111" /></svg>
        </ArrowButton>
      </TabArrows>
    </TabBar>

    <StatusBar>
      <StatusMain>For Help, press F1</StatusMain>
      <StatusCell $w={61}>Default</StatusCell>
      <StatusCell $w={55}>2015.06.26 00:00</StatusCell>
      <StatusCell $w={38}>O: 123.603</StatusCell>
      <StatusCell $w={37}>H: 123.653</StatusCell>
      <StatusCell $w={37}>L: 123.486</StatusCell>
      <StatusCell $w={37}>C: 123.536</StatusCell>
      <StatusCell $w={34}>V: 6856</StatusCell>
      <StatusCell $w={33}>
        <svg width="13" height="6">
          <path d="M1 0v6M5 0v6M9 0v6" stroke="#3c8c3c" strokeWidth="2" />
          <path d="M3 0v6M7 0v6M11 0v6" stroke="#b8b040" strokeWidth="2" />
        </svg>
      </StatusCell>
      <StatusText $w={54}>914/12 kb</StatusText>
    </StatusBar>

    <TaskBar>
      <StartButton type="button" aria-label="Start">
        <svg width="14" height="14" viewBox="0 0 14 14" fill="#fff">
          <path d="M0 2l6-.9V6.600H0zM6.800 1L14 0v6.600H6.800zM0 7.400h6v5.500L0 12zM6.800 7.400H14V14l-7.200-1z" />
        </svg>
      </StartButton>
      {apps.map(([name, open, art]) => (
        <TaskButton key={name} type="button" aria-label={name} $open={open}>
          <svg width="16" height="16" viewBox="0 0 16 16" fill="none">{art}</svg>
        </TaskButton>
      ))}
      <TaskButton type="button" aria-label="GO Markets" $open>
        <GoLogo />
      </TaskButton>
      <Tray>
        <svg width="15" height="9" viewBox="0 0 15 9" fill="none">
          <rect x="0.5" y="0.5" width="14" height="8" stroke="#fff" />
          <path d="M2 2.500h11M2 4.500h11" stroke="#fff" strokeDasharray="1 1" />
          <path d="M4 6.500h7" stroke="#fff" />
        </svg>
        <svg width="12" height="9"><path d="M4 6h4L6 3.500z" fill="#fff" /></svg>
        <svg width="9" height="9" viewBox="0 0 14 14" fill="#fff">
          <path d="M0 2l6-.9V6.600H0zM6.800 1L14 0v6.600H6.800zM0 7.400h6v5.500L0 12zM6.800 7.400H14V14l-7.200-1z" />
        </svg>
        <svg width="8" height="9" fill="none"><path d="M0.500 2h7v5.500h-7zM2 7.500V5.500h4v2M0.500 3.500h7" stroke="#fff" /></svg>
        <svg width="8" height="9" fill="none"><path d="M3.500 1.500h3.500v7H3.500z" fill="#e8dfe4" /><path d="M1.500 1v3M0 3.500h3M1.500 4v4" stroke="#fff" /></svg>
        <svg width="8" height="9"><path d="M1 8V6.500M3 8V5M5 8V3.500M7 8V1" stroke="#fff" strokeWidth="1.3" /></svg>
        <svg width="8" height="9" fill="none"><path d="M0 3.500h2l2-2.500v7.500L2 6H0z" fill="#fff" /><path d="M5.500 3q1.200 1.700 0 3.500" stroke="#fff" strokeWidth="0.8" /></svg>
        <TrayText>ENG</TrayText>
        <Clock>
          <span>11:16 AM</span>
          <span>8/08/2015</span>
        </Clock>
      </Tray>
    </TaskBar>
  </Window>
);

export default App;

const GlobalStyle = createGlobalStyle`
  * {
    box-sizing: border-box;
  }
  body {
    margin: 0;
    background: #f0f0f0;
    font-family: ${UI};
  }
  button {
    padding: 0;
    border: 0;
    background: none;
    font-family: inherit;
    color: inherit;
  }
  svg {
    flex: none;
  }
`;

const Window = styled.div`
  min-height: 100vh;
  display: flex;
  flex-direction: column;
  overflow: hidden;
  background: #f0f0f0;
`;

const TitleBar = styled.header`
  height: 17px;
  display: grid;
  grid-template-columns: 1fr auto 1fr;
  align-items: center;
  padding-left: 5px;
  background: #ebebeb;
`;

const AppIcon = styled.span`
  width: 9px;
  height: 9px;
  border: 1px solid #3c4644;
  background: #20282a;
`;

const Title = styled.h1`
  margin: 0;
  font-size: 8px;
  font-weight: 400;
  line-height: 16px;
  color: #333;
`;

const WindowButtons = styled.div`
  display: flex;
  justify-self: end;
  align-self: start;
`;

const WinButton = styled.button`
  width: 14px;
  height: 11px;
  display: flex;
  align-items: center;
  justify-content: center;
`;

const CloseButton = styled(WinButton)`
  width: 21px;
  background: #bcbcbc;
`;

const MenuBar = styled.nav`
  height: 10px;
  display: flex;
  align-items: center;
  gap: 9px;
  padding-left: 7px;
  color: #999;

  & > svg {
    margin-right: -5px;
  }
`;

const MenuItem = styled.button`
  font-size: 6px;
  line-height: 8px;
`;

const MdiButtons = styled.div`
  display: flex;
  gap: 1px;
  margin-left: auto;
`;

const MdiButton = styled.button`
  width: 10px;
  height: 9px;
  display: flex;
  align-items: center;
  justify-content: center;
  border: 1px solid #c4d2e2;
  background: #e4edf6;

  &:last-child {
    width: 7px;
  }
`;

const ToolBar = styled.div`
  height: 15px;
  display: flex;
  align-items: center;
  padding-left: 4px;
  border-top: 1px solid #d4d4d4;
  background: #f2f2f2;
  font-family: ${SANS};
`;

const Handle = styled.span`
  flex: none;
  width: 4px;
  height: 11px;
  border-left: 1px solid #b4b4b4;
  border-right: 1px solid #e4e4e4;
`;

const Divider = styled.span`
  flex: none;
  width: 3px;
  height: 11px;
  border-right: 1px solid #b4b4b4;
`;

const Gap = styled.span`
  flex: none;
  width: 2px;
`;

const ToolButton = styled.button`
  flex: none;
  width: 15px;
  height: 13px;
  display: flex;
  align-items: center;
  justify-content: center;
  border: 1px solid ${({ $active }) => ($active ? "#cacaca" : "transparent")};
  background: ${({ $active }) => ($active ? "#fafafa" : "none")};
`;

const LetterTool = styled(ToolButton)`
  font-size: 7px;
  font-weight: 600;
  color: #555;
`;

const PeriodButton = styled(ToolButton)`
  font-size: 5px;
  font-weight: 500;
  color: #555;
`;

const DropButton = styled.button`
  flex: none;
  width: 20px;
  height: 13px;
  display: flex;
  align-items: center;
  gap: 1px;
  padding-left: 2px;
`;

const Caret = styled.span`
  border: 2px solid transparent;
  border-top-color: #222;
  border-bottom: 0;
`;

const TextTool = styled.button`
  flex: none;
  width: ${({ $w }) => $w}px;
  height: 13px;
  display: flex;
  align-items: center;
  gap: 2px;
  padding-left: 2px;
  font-size: 6px;
  font-weight: 500;
  white-space: nowrap;
  color: #222;
`;

const SearchBox = styled.label`
  width: 92px;
  height: 12px;
  display: flex;
  align-items: center;
  margin-left: auto;
  padding-right: 2px;
  border: 1px solid #b8b8b8;
  background: #fff;
`;

const SearchInput = styled.input`
  flex: 1;
  min-width: 0;
  height: 9px;
  padding: 0 2px;
  border: 0;
  outline: 0;
  font-size: 6px;
`;

const ChatButton = styled.button`
  width: 15px;
  height: 12px;
  display: flex;
  align-items: center;
  justify-content: center;
`;

const ChartFrame = styled.main`
  display: flex;
  margin-left: 5px;
  border-top: 2px solid #9c9c9c;
  border-left: 2px solid #8c8c8c;
  background: #fff;
`;

const PlotSvg = styled.svg`
  flex: 1;
  min-width: 0;
  height: 493px;
  display: block;
`;

const ScaleSvg = styled.svg`
  width: 22px;
  height: 493px;
  display: block;
`;

const Tiny = styled.text`
  font-family: ${SANS};
  font-size: 5px;
  fill: ${({ $color }) => $color || "#222"};
`;

const Note = styled.text`
  font-family: ${ARIAL};
  font-size: ${({ $size }) => $size || 6}px;
  fill: ${({ $color }) => $color};
`;

const MonoNote = styled.text`
  font-family: "DejaVu Sans Mono", monospace;
  font-size: 9px;
  fill: #d83434;
`;

const TabBar = styled.div`
  height: 12px;
  display: flex;
  margin-left: 5px;
  padding-left: 2px;
  border-top: 1px solid #555;
`;

const TabList = styled.div`
  flex: 1;
  min-width: 0;
  display: flex;
`;

const Tab = styled.button`
  flex: ${({ $grow }) => $grow} 1 0;
  height: ${({ $active }) => ($active ? 10 : 9)}px;
  border-right: 1px solid ${({ $active }) => ($active ? "#333" : "#999")};
  border-left: ${({ $active }) => ($active ? "1px solid #333" : 0)};
  border-bottom: ${({ $active }) => ($active ? "1px solid #333" : 0)};
  background: ${({ $active }) => ($active ? "#fff" : "none")};
  font-size: 6px;
  line-height: 9px;
  white-space: nowrap;
  color: ${({ $active }) => ($active ? "#111" : "#808080")};
`;

const TabArrows = styled.div`
  width: 18px;
  display: flex;
  justify-content: space-around;
`;

const ArrowButton = styled.button`
  display: flex;
  align-items: center;
`;

const StatusBar = styled.footer`
  height: 14px;
  display: flex;
  align-items: flex-start;
  padding: 1px 0 0 5px;
  font-size: 6px;
  line-height: 8px;
  color: #222;
`;

const StatusMain = styled.span`
  flex: 1;
`;

const StatusText = styled.span`
  width: ${({ $w }) => $w}px;
  padding-left: 3px;
  white-space: nowrap;
`;

const StatusCell = styled(StatusText)`
  border-left: 1px solid #c0c0c0;
`;

const TaskBar = styled.div`
  position: fixed;
  left: 0;
  right: 0;
  bottom: 0;
  height: 21px;
  display: flex;
  background: linear-gradient(rgba(93, 24, 53, 0.45) 8px, #4e2e3c 8px);
`;

const StartButton = styled.button`
  width: 27px;
  display: flex;
  align-items: center;
  justify-content: center;
`;

const TaskButton = styled.button`
  width: 33px;
  display: flex;
  align-items: center;
  justify-content: center;
  border: solid ${({ $open }) => ($open ? "rgba(255, 255, 255, 0.2)" : "transparent")};
  border-width: 0 1px;
  background: ${({ $open }) => ($open ? "rgba(255, 255, 255, 0.18)" : "none")};
`;

const Tray = styled.div`
  display: flex;
  align-items: center;
  gap: 4px;
  margin-left: auto;
  padding-right: 9px;
  color: #fff;
  font-family: ${SANS};
`;

const TrayText = styled.span`
  font-size: 7px;
  line-height: 9px;
`;

const Clock = styled.time`
  width: 30px;
  margin-left: 4px;
  display: flex;
  flex-direction: column;
  align-items: center;
  font-size: 7px;
  line-height: 9px;
  white-space: nowrap;
`;
